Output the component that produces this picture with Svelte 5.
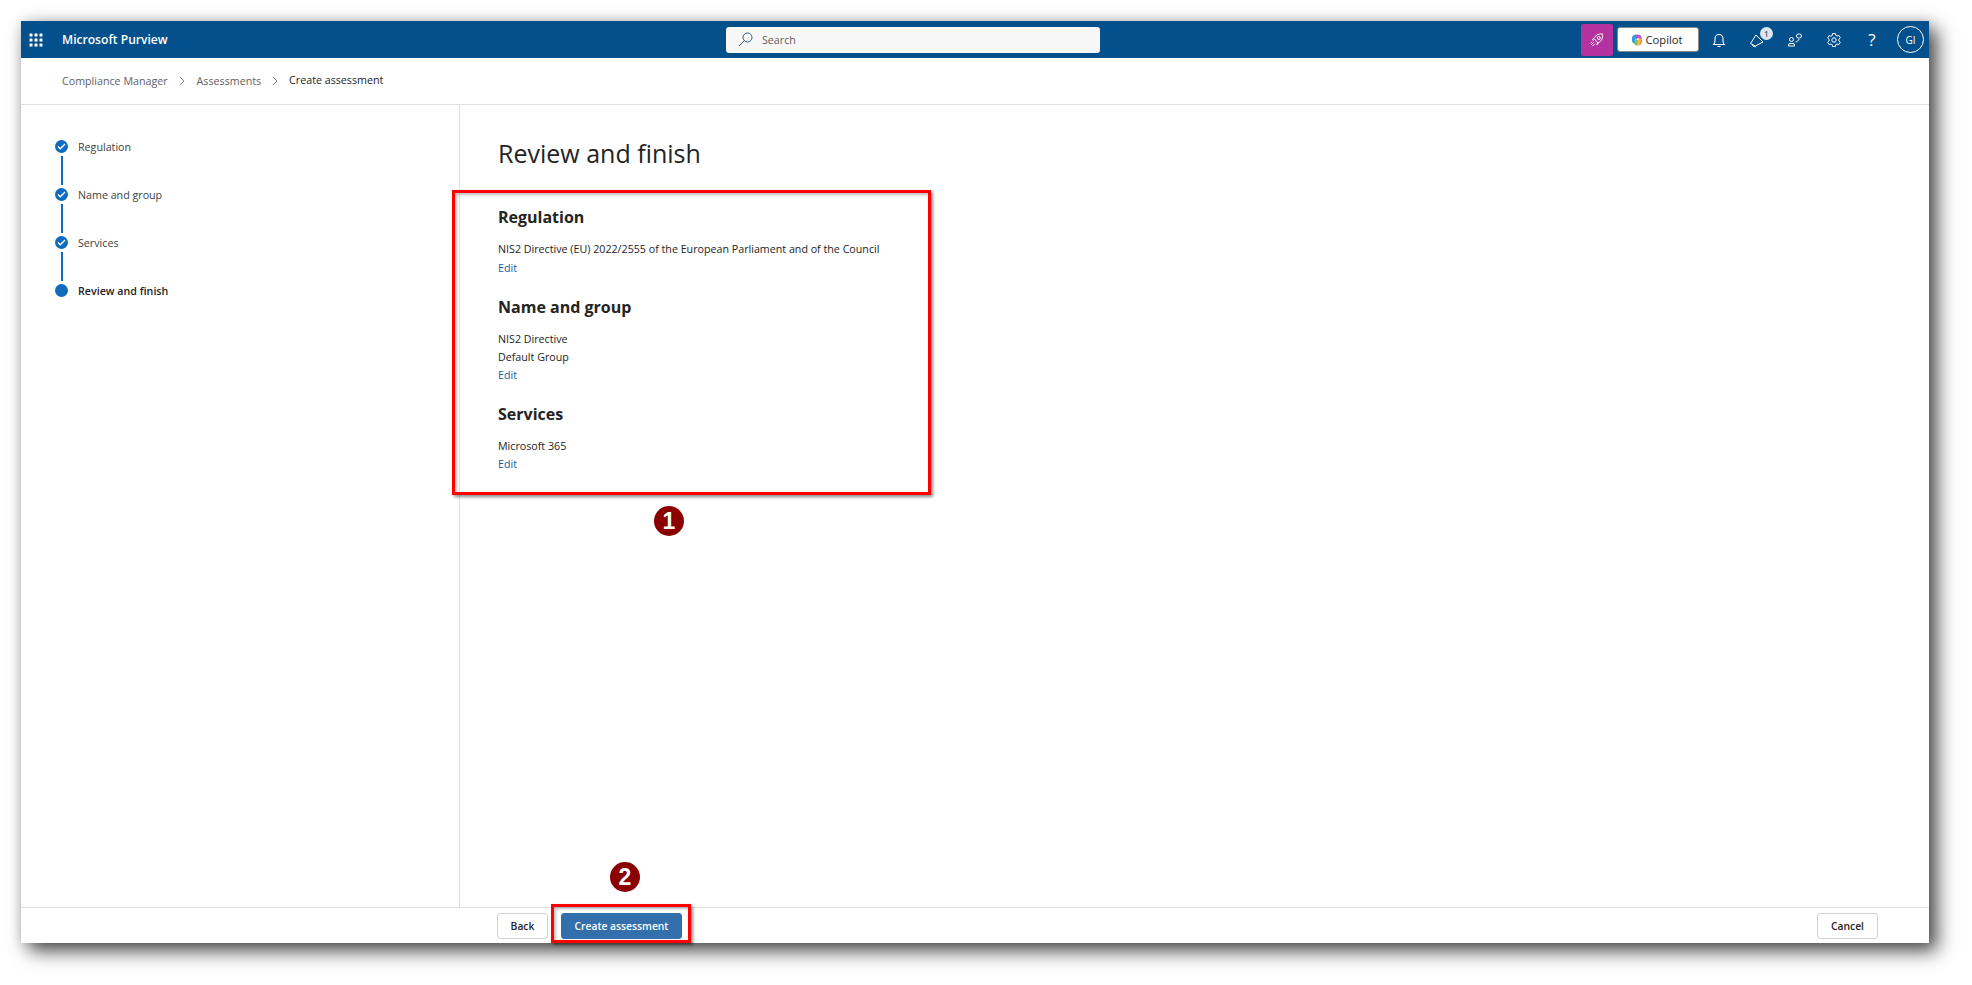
<script>
  const steps = [
    { label: 'Regulation', done: true },
    { label: 'Name and group', done: true },
    { label: 'Services', done: true },
    { label: 'Review and finish', done: false },
  ]

  const sections = [
    { title: 'Regulation', lines: ['NIS2 Directive (EU) 2022/2555 of the European Parliament and of the Council'] },
    { title: 'Name and group', lines: ['NIS2 Directive', 'Default Group'] },
    { title: 'Services', lines: ['Microsoft 365'] },
  ]
</script>

<div class="page">
  <div class="window">
    <header class="topbar">
      <div class="brand">
        <svg class="waffle" width="14" height="14" viewBox="0 0 14 14" fill="#fff" aria-hidden="true">
          {#each [0, 5, 10] as y}
            {#each [0, 5, 10] as x}
              <rect x={x + 0.5} y={y + 0.5} width="3" height="3" rx="0.6" />
            {/each}
          {/each}
        </svg>
        <span class="product">Microsoft Purview</span>
      </div>

      <div class="search">
        <svg width="15" height="15" viewBox="0 0 15 15" fill="none" stroke="#33587f" stroke-width="1" aria-hidden="true">
          <circle cx="9.5" cy="5.5" r="4.5" />
          <path d="M6.2 8.8 1 14" />
        </svg>
        <span>Search</span>
      </div>

      <div class="actions">
        <button class="purple" aria-label="Rocket">
          <svg width="16" height="16" viewBox="0 0 16 16" fill="none" stroke="#fff" stroke-width="1" aria-hidden="true">
            <path d="M5 6.500C6 3.500 9.500 1.500 13.500 2 14 6 12.500 9.500 9 11Z" />
            <circle cx="9.800" cy="6" r="1.500" />
            <path d="M5 6.500 3.200 7.500l1.300 1.300M9 11l-.8 1.800-1.300-1.300M4.500 10.500 2 13M5.500 12 3.500 14M3 9.800 1.500 11.300" />
          </svg>
        </button>
        <button class="copilot">
          <svg width="12" height="12" viewBox="0 0 14 14" aria-hidden="true">
            <path d="M1 6c0-3 1.500-5 4-5h3L5 7v3.500C3 12 1 9.500 1 6Z" fill="#2f9fe0" />
            <path d="M5 1h4c1.800 0 2.600 1 3 2.500L13 7 9 4.500 6 6Z" fill="#b05ad6" />
            <path d="M13 7c0 3.500-1.500 6-4 6H5.500L9 7.500V4.500Z" fill="#ef6a5b" />
            <path d="M3.500 11 6 6l3 1.500L7 13H5Z" fill="#7ac35b" />
            <path d="M7 9.500 9.500 5 12.500 6.500 10 13H7.500Z" fill="#f6b73c" />
          </svg>
          Copilot
        </button>
        <button class="icon" aria-label="Notifications">
          <svg width="16" height="16" viewBox="0 0 16 16" fill="none" stroke="#fff" stroke-width="1.100" aria-hidden="true">
            <path d="M2.800 12.500c1-1 1.200-2 1.200-4V6.500a4 4 0 0 1 8 0v2c0 2 .2 3 1.200 4Z" />
            <path d="M6.500 14.500h3" />
          </svg>
        </button>
        <button class="icon feedback" aria-label="Feedback">
          <svg width="16" height="16" viewBox="0 0 16 16" fill="none" stroke="#fff" stroke-width="1" aria-hidden="true">
            <path d="M7 3 1.500 11.500l5 2.500L14 10Z" />
            <path d="M3.500 12.500a2 2 0 0 0 3.700 1.300" />
          </svg>
          <span class="count">1</span>
        </button>
        <button class="icon" aria-label="People">
          <svg width="16" height="16" viewBox="0 0 16 16" fill="none" stroke="#fff" stroke-width="1" aria-hidden="true">
            <circle cx="4.500" cy="7.500" r="2" />
            <path d="M1.500 14v-1a1.500 1.500 0 0 1 1.500-1.500h3A1.500 1.500 0 0 1 7.500 13v1Z" />
            <rect x="9.500" y="2" width="5" height="4" rx="2" />
            <path d="M8.500 10c1.500-.2 3-1.200 3.500-3" />
          </svg>
        </button>
        <button class="icon" aria-label="Settings">
          <svg width="16" height="16" viewBox="0 0 16 16" fill="none" stroke="#fff" stroke-width="1" aria-hidden="true">
            <circle cx="8" cy="8" r="2.200" />
            <path d="M6.600 1.500h2.800l.4 1.800 1.300.7 1.800-.6 1.400 2.400-1.400 1.300v1.800l1.400 1.300-1.400 2.400-1.800-.6-1.300.7-.4 1.800H6.600l-.4-1.800-1.300-.7-1.800.6L1.700 10.400l1.400-1.300V7.300L1.700 6l1.400-2.400 1.800.6 1.300-.7Z" />
          </svg>
        </button>
        <button class="icon help" aria-label="Help">?</button>
        <span class="avatar">GI</span>
      </div>
    </header>

    <nav class="crumbs">
      <span>Compliance Manager</span>
      <svg width="6" height="10" viewBox="0 0 6 10" fill="none" stroke="#8a8886" aria-hidden="true"><path d="m1 1 4 4-4 4" /></svg>
      <span class="mid">Assessments</span>
      <svg width="6" height="10" viewBox="0 0 6 10" fill="none" stroke="#8a8886" aria-hidden="true"><path d="m1 1 4 4-4 4" /></svg>
      <strong>Create assessment</strong>
    </nav>

    <div class="body">
      <aside class="wizard">
        {#each steps as step, i}
          <div class="step" class:current={!step.done}>
            <div class="marker">
              <span class="dot">
                {#if step.done}
                  <svg width="9" height="7" viewBox="0 0 9 7" fill="none" stroke="#fff" stroke-width="1.400" aria-hidden="true"><path d="m1 3.500 2.300 2.300L8 1" /></svg>
                {/if}
              </span>
              {#if i < steps.length - 1}
                <span class="line"></span>
              {/if}
            </div>
            <span class="label">{step.label}</span>
          </div>
        {/each}
      </aside>

      <main class="review">
        <h1>Review and finish</h1>
        {#each sections as section}
          <section>
            <h2>{section.title}</h2>
            {#each section.lines as line}
              <p>{line}</p>
            {/each}
            <a href="#edit">Edit</a>
          </section>
        {/each}
      </main>
    </div>

    <footer class="footer">
      <button class="btn">Back</button>
      <button class="btn primary">Create assessment</button>
      <button class="btn cancel">Cancel</button>
    </footer>
  </div>

  <div class="callout box-review"></div>
  <div class="callout box-create"></div>
  <span class="num num-1">1</span>
  <span class="num num-2">2</span>
</div>

<style>
  :global(body) {
    margin: 0;
    background: #fff;
  }

  .page {
    position: relative;
    width: 1972px;
    height: 985px;
    overflow: hidden;
    padding: 21px 0 0 21px;
    box-sizing: border-box;
    font-family: 'Open Sans', 'Noto Sans', sans-serif;
    font-size: 10.7px;
    color: #242424;
  }

  .window {
    width: 1908px;
    height: 922px;
    display: flex;
    flex-direction: column;
    background: #fff;
    box-shadow:
      8px 8px 18px rgba(0, 0, 0, 0.7),
      0 0 12px rgba(0, 0, 0, 0.14);
  }

  button {
    font-family: inherit;
  }

  .topbar {
    height: 37px;
    flex: none;
    display: flex;
    align-items: center;
    background: #04508c;
    color: #fff;
    position: relative;
  }

  .brand {
    width: 705px;
    flex: none;
    display: flex;
    align-items: center;
    padding-left: 8px;
    box-sizing: border-box;
  }

  .waffle {
    margin-right: 19px;
  }

  .product {
    font-weight: 600;
    font-size: 12.1px;
  }

  .search {
    width: 374px;
    height: 26px;
    flex: none;
    display: flex;
    align-items: center;
    gap: 9px;
    padding-left: 12px;
    box-sizing: border-box;
    background: #f7f7f7;
    border-radius: 3px;
    color: #605e5c;
  }

  .actions {
    margin-left: auto;
    display: flex;
    align-items: center;
    height: 100%;
    padding-right: 5px;
  }

  .actions button {
    border: none;
    background: none;
    padding: 0;
    display: flex;
    align-items: center;
    justify-content: center;
  }

  .actions .purple {
    width: 32px;
    height: 32px;
    margin-right: 4px;
    background: #b4329f;
    border-radius: 2px;
  }

  .actions .copilot {
    width: 82px;
    height: 25px;
    gap: 3px;
    margin-right: 1px;
    padding-right: 2px;
    background: #fff;
    border: 1px solid #8a8886;
    border-radius: 3px;
    font-size: 11.2px;
    color: #242424;
    box-sizing: border-box;
  }

  .actions .icon {
    width: 38.300px;
    height: 32px;
    position: relative;
  }

  .actions .help {
    color: #fff;
    font-size: 17px;
    font-weight: 400;
  }

  .count {
    position: absolute;
    top: 3px;
    left: 22px;
    width: 13px;
    height: 13px;
    border-radius: 50%;
    background: #dce6f2;
    color: #44546a;
    font-size: 8px;
    font-weight: 600;
    line-height: 13px;
    text-align: center;
  }

  .avatar {
    width: 25px;
    height: 25px;
    margin-left: 6px;
    border: 1px solid #fff;
    border-radius: 50%;
    display: flex;
    align-items: center;
    justify-content: center;
    font-size: 10px;
  }

  .crumbs {
    height: 47px;
    flex: none;
    display: flex;
    align-items: center;
    gap: 11px;
    padding-left: 41px;
    box-sizing: border-box;
    border-bottom: 1px solid #e1e1e1;
    color: #616161;
  }

  .crumbs .mid {
    margin-left: 1px;
  }

  .crumbs strong {
    font-weight: 400;
    color: #242424;
    position: relative;
    top: -1px;
  }

  .body {
    flex: 1;
    display: flex;
    min-height: 0;
  }

  .wizard {
    width: 439px;
    flex: none;
    box-sizing: border-box;
    border-right: 1px solid #e1e1e1;
    padding: 35px 0 0 34px;
  }

  .step {
    height: 48px;
    display: flex;
    gap: 10px;
    color: #424242;
  }

  .step.current {
    font-weight: 600;
    color: #242424;
  }

  .marker {
    width: 13px;
    display: flex;
    flex-direction: column;
    align-items: center;
  }

  .dot {
    width: 13px;
    height: 13px;
    flex: none;
    border-radius: 50%;
    background: #0f6cbd;
    display: flex;
    align-items: center;
    justify-content: center;
  }

  .line {
    width: 2px;
    height: 29px;
    margin-top: 3px;
    margin-left: 1px;
    background: #0f6cbd;
  }

  .label {
    line-height: 14px;
  }

  .review {
    flex: 1;
    padding: 30px 0 0 38px;
  }

  h1 {
    margin: 0 0 16px;
    font-size: 25px;
    line-height: 36px;
    font-weight: 400;
    color: #242424;
  }

  h2 {
    margin: 0 0 11px;
    font-size: 16px;
    line-height: 24px;
    font-weight: 700;
    color: #242424;
  }

  section {
    padding-top: 18px;
  }

  section:first-of-type a {
    margin-top: 1px;
  }

  p {
    margin: 0;
    line-height: 18px;
  }

  .review a {
    display: block;
    line-height: 18px;
    color: #115ea3;
    text-decoration: none;
  }

  .footer {
    height: 36px;
    flex: none;
    display: flex;
    align-items: center;
    box-sizing: border-box;
    border-top: 1px solid #e1e1e1;
    padding: 0 51px 0 476px;
    gap: 13px;
  }

  .btn {
    height: 26px;
    padding: 0;
    border: 1px solid #d1d1d1;
    border-radius: 3px;
    background: #fff;
    color: #242424;
    font-size: 10.3px;
    font-weight: 600;
    width: 51px;
  }

  .btn.primary {
    width: 121px;
    background: #326fab;
    border-color: #326fab;
    color: #fff;
  }

  .btn.cancel {
    width: 61px;
    margin-left: auto;
  }

  .callout {
    position: absolute;
    box-sizing: border-box;
    border: 3px solid #f00;
    box-shadow: 2px 2px 3px rgba(0, 0, 0, 0.45), inset 2px 2px 3px rgba(0, 0, 0, 0.25);
  }

  .box-review {
    left: 452px;
    top: 190px;
    width: 479px;
    height: 305px;
  }

  .box-create {
    left: 551px;
    top: 904px;
    width: 140px;
    height: 39px;
  }

  .num {
    position: absolute;
    width: 30px;
    height: 30px;
    border-radius: 50%;
    background: #8b0000;
    color: #fff;
    font-family: 'Liberation Sans', sans-serif;
    font-size: 23px;
    font-weight: 700;
    line-height: 30px;
    text-align: center;
  }

  .num-1 {
    left: 654px;
    top: 506px;
  }

  .num-2 {
    left: 610px;
    top: 862px;
  }
</style>
